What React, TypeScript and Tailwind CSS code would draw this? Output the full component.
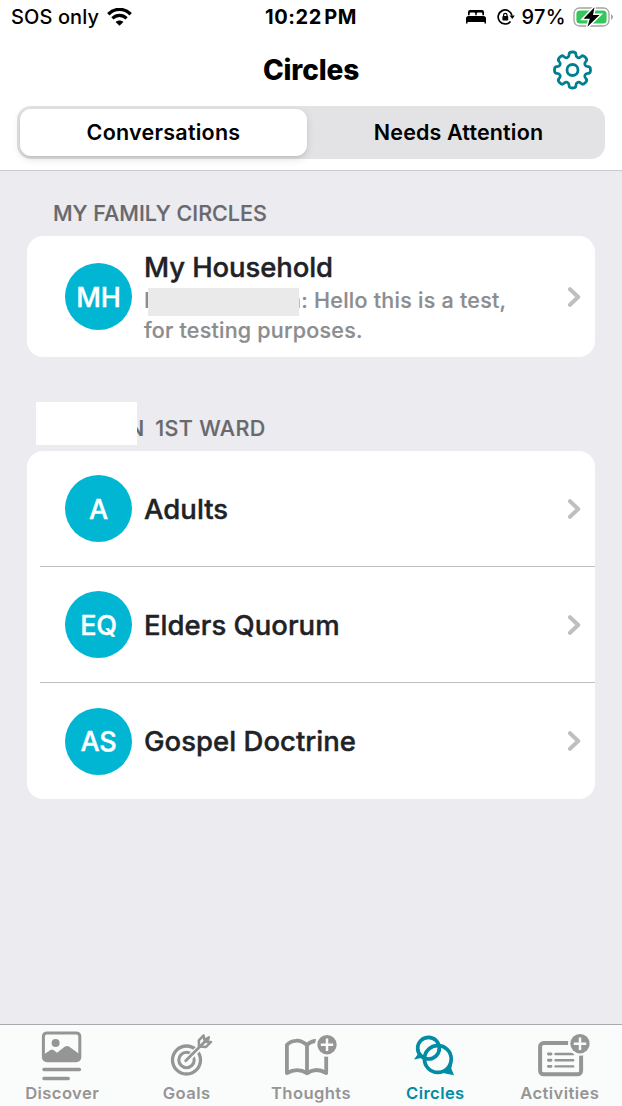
import type { ReactNode } from 'react';

function gearPath(cx: number, cy: number) {
  const corners: [number, number][] = [];
  for (let tooth = 0; tooth < 8; tooth++) {
    const base = tooth * 45;
    for (const [offset, radius] of [[-15, 13.6], [-10.5, 18.3], [10.5, 18.3], [15, 13.6]]) {
      const angle = ((base + offset) * Math.PI) / 180;
      corners.push([cx + radius * Math.cos(angle), cy + radius * Math.sin(angle)]);
    }
  }
  const along = (a: [number, number], b: [number, number], t: number) =>
    `${(a[0] + (b[0] - a[0]) * t).toFixed(2)} ${(a[1] + (b[1] - a[1]) * t).toFixed(2)}`;
  const count = corners.length;
  return (
    corners
      .map((corner, i) => {
        const before = corners[(i + count - 1) % count];
        const after = corners[(i + 1) % count];
        return `${i === 0 ? 'M' : 'L'}${along(corner, before, 0.45)}Q${corner[0].toFixed(2)} ${corner[1].toFixed(2)} ${along(corner, after, 0.45)}`;
      })
      .join('') + 'Z'
  );
}

function GearIcon() {
  return (
    <svg className="mt-px mr-[30px] size-[40px] justify-self-end" viewBox="0 0 40 40" fill="none" stroke="#007f91" strokeWidth="2.800" strokeLinejoin="round">
      <path d={gearPath(20.5, 20)} />
      <circle cx="20.500" cy="20" r="5.500" />
    </svg>
  );
}

function WifiIcon() {
  return (
    <svg className="ml-2 h-[18px] w-[25px]" viewBox="0 0 25 18" fill="none" stroke="black">
      <path d="M1.3 6.2C7.6-.2 17.4-.2 23.7 6.2" strokeWidth="3.4" />
      <path d="M5.4 10.4C9.6 6.4 15.4 6.4 19.6 10.4" strokeWidth="3.2" />
      <path d="M12.5 17.8 8.6 14C10.9 12 14.1 12 16.4 14Z" fill="black" stroke="none" />
    </svg>
  );
}

function BedIcon() {
  return (
    <svg className="h-[15px] w-[20px]" viewBox="0 0 20 15">
      <path d="M2 6.2V3Q2 1 4 1H16Q18 1 18 3V6.2H16.4V5Q16.4 3.6 15 3.6H12Q10.7 3.6 10.7 5V6.2H9.3V5Q9.3 3.6 8 3.6H5Q3.6 3.6 3.6 5V6.2Z" />
      <path d="M0 14.4V9.5Q0 7 2.6 7H17.4Q20 7 20 9.5V14.4H18.5V12.9H1.5V14.4Z" />
    </svg>
  );
}

function RotationLockIcon() {
  return (
    <svg className="h-[18px] w-[18px]" viewBox="0 0 18 18" fill="none" stroke="black">
      <path d="M13.500 13.500A7 7 0 1 1 15 7.500" strokeWidth="1.700" />
      <path d="M12.500 7.400H17.800L15.300 11Z" fill="black" stroke="none" />
      <rect x="5.400" y="8" width="5.800" height="4.600" rx=".8" fill="black" stroke="none" />
      <path d="M6.600 8.500V7a1.700 1.700 0 0 1 3.400 0V8.500" strokeWidth="1.200" />
    </svg>
  );
}

function BatteryIcon() {
  return (
    <svg className="h-[22px] w-[40px]" viewBox="573 5 40 22">
      <rect x="574" y="7" width="35" height="18" rx="5.500" fill="none" stroke="#a3a3a3" strokeWidth="1.300" />
      <path d="M611 13Q613 14.300 613 16T611 19Z" fill="#a3a3a3" />
      <rect x="576.400" y="9.400" width="30.200" height="13.200" rx="3.500" fill="#34c759" />
      <path d="M594.500 6.200 583.500 17.800H589.800L587.500 25.800 599.500 14H593Z" stroke="white" strokeWidth="3" fill="white" />
      <path d="M594.500 6.200 583.500 17.800H589.800L587.500 25.800 599.500 14H593Z" />
    </svg>
  );
}

function DiscoverIcon() {
  return (
    <svg className="h-[52px] w-[52px]" viewBox="36 1030 52 52">
      <rect x="43.400" y="1032.900" width="36.400" height="27.800" rx="3.500" fill="none" stroke="#959595" strokeWidth="3" />
      <circle cx="55.600" cy="1043.100" r="4" fill="#959595" />
      <path d="M43 1055 50.500 1050Q52 1049 53.500 1050L57 1052.700 65 1046.600Q67 1045.200 69 1046.600L80 1054.500V1060.500H43Z" fill="#959595" />
      <path d="M44 1069.500H79.400M44 1078.500H68.200" stroke="#959595" strokeWidth="3.500" strokeLinecap="round" />
    </svg>
  );
}

function GoalsIcon() {
  return (
    <svg className="h-[52px] w-[52px]" viewBox="161 1030 52 52" fill="none" stroke="#959595">
      <circle cx="186.500" cy="1060" r="14" strokeWidth="3.300" />
      <circle cx="186.500" cy="1060" r="7.700" strokeWidth="3.100" />
      <path d="M187 1060 203 1044" stroke="#fafbfb" strokeWidth="6" />
      <path d="M185.700 1060.700 205.500 1041" strokeWidth="2.800" strokeLinecap="round" />
      <path d="M199 1046.500 198.800 1040.300 203.600 1035.500 204.400 1040 208.900 1037.300 207 1042 211 1041.900 206 1046.900Z" strokeWidth="2.500" strokeLinejoin="round" />
    </svg>
  );
}

function ThoughtsIcon() {
  return (
    <svg className="h-[52px] w-[56px]" viewBox="283 1030 56 52" fill="none">
      <g stroke="#959595" strokeWidth="3.800" strokeLinejoin="round" strokeLinecap="round">
        <path d="M307 1045Q301 1040 295.500 1040.800 290 1041.200 286.900 1045V1073Q297.500 1067 307 1073.200Q316 1067 326.200 1073V1056" />
        <path d="M307 1045V1073M307 1045Q310.500 1041.500 315 1041" />
      </g>
      <circle cx="327" cy="1044.700" r="12" fill="#fafbfb" />
      <circle cx="327" cy="1044.700" r="9.700" fill="#959595" />
      <path d="M320.800 1044.700H333.200M327 1038.500V1050.900" stroke="#fafbfb" strokeWidth="2.500" />
    </svg>
  );
}

function CirclesIcon() {
  return (
    <svg className="h-[52px] w-[52px]" viewBox="409 1030 52 52" fill="none" stroke="#008ca3" strokeWidth="3.700">
      <circle cx="428.500" cy="1048.200" r="10.800" />
      <circle cx="437.800" cy="1059" r="13.400" />
      <path d="M416.300 1048 418 1054 413.900 1059.600 425 1057.200 420 1052Z" fill="#008ca3" stroke="none" />
      <path d="M452.300 1063 451.300 1068.500 454 1075.300 443 1073 447.500 1067Z" fill="#008ca3" stroke="none" />
    </svg>
  );
}

function ActivitiesIcon() {
  return (
    <svg className="h-[52px] w-[56px]" viewBox="532 1030 56 52" fill="none" overflow="visible">
      <rect x="540.100" y="1043.100" width="41" height="31.200" rx="3.500" stroke="#959595" strokeWidth="4" />
      <path d="M555.500 1054H573.200M555.500 1060.300H573.200M555.500 1066.400H573.200" stroke="#959595" strokeWidth="2.400" strokeLinecap="round" />
      <path d="M548.400 1054H551M548.400 1060.300H551M548.400 1066.400H551" stroke="#959595" strokeWidth="2.900" strokeLinecap="round" />
      <circle cx="580" cy="1043.700" r="12" fill="#fafbfb" />
      <circle cx="580" cy="1043.700" r="9.700" fill="#959595" />
      <path d="M573.800 1043.700H586.200M580 1037.500V1049.900" stroke="#fafbfb" strokeWidth="2.500" />
    </svg>
  );
}

function Chevron() {
  return (
    <svg className="mr-[14px] ml-auto h-[22px] w-[14px] shrink-0" viewBox="0 0 14 22" fill="none" stroke="#bfbfbf" strokeWidth="4" strokeLinecap="round" strokeLinejoin="round">
      <path d="M3 3.200 11.200 11 3 18.800" />
    </svg>
  );
}

function Row({ initials, children }: { initials: string; children: ReactNode }) {
  return (
    <div className="flex h-full items-center pl-[38px]">
      <div className="mr-3 flex size-[67px] shrink-0 items-center justify-center rounded-full bg-[#00b6d3] pt-[3px] text-[27px] font-medium tracking-[-0.200px] text-white [-webkit-text-stroke:0.400px]">
        {initials}
      </div>
      {children}
      <Chevron />
    </div>
  );
}

function Tab({ label, active, children }: { label: string; active?: boolean; children: ReactNode }) {
  return (
    <div className={`flex w-[124.400px] flex-col items-center pt-[5px] text-[16.600px] leading-[20px] font-semibold tracking-[0.400px] ${active ? 'text-[#008ca3]' : 'text-[#959595]'}`}>
      {children}
      <span className="mt-px">{label}</span>
    </div>
  );
}

const groups = [
  { initials: 'A', name: 'Adults' },
  { initials: 'EQ', name: 'Elders Quorum' },
  { initials: 'AS', name: 'Gospel Doctrine' },
];

export default function App() {
  return (
    <div className="flex h-[1106px] w-[622px] flex-col overflow-hidden bg-[#ebebf0] font-['Inter',sans-serif] text-black">
      <header className="h-[171px] shrink-0 border-b border-[#cbcbce] bg-white">
        <div className="grid h-[33px] grid-cols-3 items-center text-[20px]">
          <div className="flex items-center pl-[11px] font-medium tracking-[0.100px] whitespace-nowrap">
            <span>SOS only</span>
            <WifiIcon />
          </div>
          <div className="text-center font-bold tracking-[0.600px] [word-spacing:-3px]">10:22 PM</div>
          <div className="flex items-center justify-end pr-[9px] font-medium">
            <BedIcon />
            <span className="w-[11px]" />
            <RotationLockIcon />
            <span className="mr-[7px] ml-[7px] tracking-[0.300px]">97%</span>
            <BatteryIcon />
          </div>
        </div>
        <div className="grid h-[73px] grid-cols-3 items-center">
          <h1 className="col-start-2 text-center text-[28px] font-extrabold tracking-[-0.150px]">Circles</h1>
          <GearIcon />
        </div>
        <div className="mx-[17px] flex h-[53px] rounded-[14px] bg-[#e3e3e5] p-[3px] text-[21.500px] font-semibold">
          <div className="flex w-[287px] items-center justify-center rounded-[11px] bg-white tracking-[0.250px] shadow-[0_3px_8px_rgba(0,0,0,0.12),0_2px_2px_rgba(0,0,0,0.05)]">Conversations</div>
          <div className="flex flex-1 items-center justify-center pl-[8px] tracking-[0.150px]">Needs Attention</div>
        </div>
      </header>

      <main className="flex-1 pr-[27px] pl-[27px]">
        <h2 className="flex h-[65px] items-end pb-[9px] pl-[26px] text-[21.500px] leading-[28px] font-medium text-[#68686d] [-webkit-text-stroke:0.200px]">MY FAMILY CIRCLES</h2>
        <section className="h-[121px] rounded-[16px] bg-white">
          <Row initials="MH">
            <div className="whitespace-nowrap">
              <div className="pt-px text-[27.500px] leading-[34px] font-medium tracking-[-0.100px] text-[#212226] [-webkit-text-stroke:0.400px]">My Household</div>
              <div className="flex h-[30px] items-start text-[21.500px] leading-[30px] font-medium tracking-[0.250px] text-[#8b8d8f] [-webkit-text-stroke:0.200px]">
                <span className="pt-px">I</span>
                <span className="relative mt-[4px] ml-[-2px] h-[28px] w-[151px] bg-[#eaeaea]" />
                <span className="ml-[-11px] pt-px">n</span>
                <span className="pt-px">: Hello this is a test,</span>
              </div>
              <div className="pt-px text-[21.500px] leading-[30px] font-medium tracking-[0.220px] text-[#8b8d8f] [-webkit-text-stroke:0.200px]">for testing purposes.</div>
            </div>
          </Row>
        </section>
        <h2 className="flex h-[94px] items-end pb-[6px] pl-[9px] text-[21.500px] font-medium text-[#68686d] [-webkit-text-stroke:0.200px]">
          <span className="relative h-[43px] w-[101px] bg-white" />
          <span className="mb-[3px] ml-[-9px] leading-[28px]">N</span>
          <span className="mb-[3px] ml-[11px] leading-[28px] tracking-[0.350px]">1ST WARD</span>
        </h2>
        <section className="h-[348px] rounded-[16px] bg-white">
          {groups.map((group, index) => (
            <div key={group.name} className="flex h-[116px] flex-col">
              <div className="min-h-0 flex-1">
                <Row initials={group.initials}>
                  <span className="pt-[2px] text-[27.500px] font-medium tracking-[0.020px] text-[#212226] [-webkit-text-stroke:0.400px]">{group.name}</span>
                </Row>
              </div>
              {index < groups.length - 1 && <div className="ml-[13px] h-px bg-[#bfbfc1]" />}
            </div>
          ))}
        </section>
      </main>

      <nav className="flex h-[82px] shrink-0 border-t border-[#aaa9b0] bg-[#fafbfb]">
        <Tab label="Discover"><DiscoverIcon /></Tab>
        <Tab label="Goals"><GoalsIcon /></Tab>
        <Tab label="Thoughts"><ThoughtsIcon /></Tab>
        <Tab label="Circles" active><CirclesIcon /></Tab>
        <Tab label="Activities"><ActivitiesIcon /></Tab>
      </nav>
    </div>
  );
}
